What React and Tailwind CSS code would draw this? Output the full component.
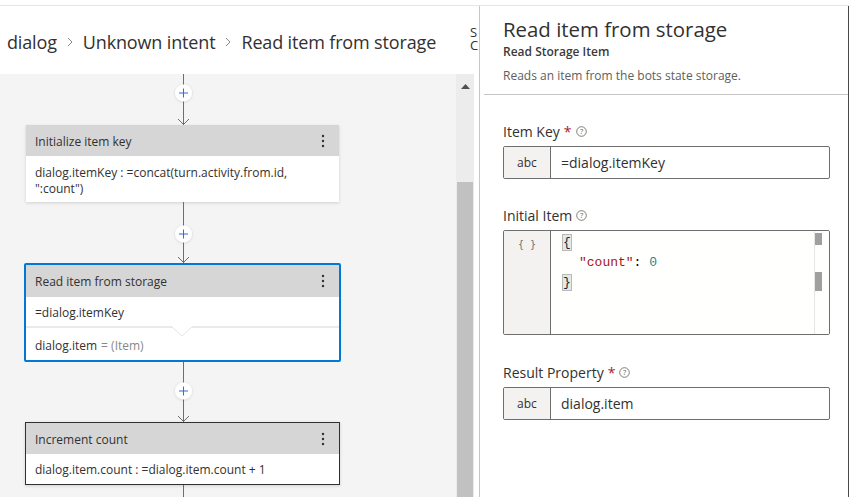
import React from "react";

const FONT = { fontFamily: '"Open Sans", "Noto Sans", sans-serif' };

function Chevron() {
  return (
    <svg width="8" height="12" viewBox="0 0 8 12" className="mx-[9px] shrink-0">
      <path d="M2 2 L6 6 L2 10" fill="none" stroke="#8a8886" strokeWidth="1" />
    </svg>
  );
}

function Connector({ h, c }) {
  return (
    <svg width="40" height={h} viewBox={`0 0 40 ${h}`} className="block">
      <defs>
        <filter id={`sh${h}`} x="-50%" y="-50%" width="200%" height="200%">
          <feDropShadow dx="0" dy="0.5" stdDeviation="1" floodColor="#000" floodOpacity="0.18" />
        </filter>
      </defs>
      <line x1="20.5" y1="0" x2="20.5" y2={h} stroke="#6e6e6e" strokeWidth="1" />
      <path d={`M15 ${h - 6} L20.5 ${h - 0.5} L26 ${h - 6}`} fill="none" stroke="#6e6e6e" strokeWidth="1" />
      <circle cx="20.5" cy={c} r="8.5" fill="#fff" filter={`url(#sh${h})`} />
      <path d={`M20.5 ${c - 4.5} V${c + 4.5} M16 ${c} H25`} stroke="#2f6fd6" strokeWidth="1" />
    </svg>
  );
}

function Kebab() {
  return (
    <svg width="4" height="14" viewBox="0 0 4 14">
      <circle cx="2" cy="2" r="1.2" fill="#323130" />
      <circle cx="2" cy="7" r="1.2" fill="#323130" />
      <circle cx="2" cy="12" r="1.2" fill="#323130" />
    </svg>
  );
}

function NodeHeader({ title, h = "h-[31px]" }) {
  return (
    <div className={`${h} bg-[#d6d6d6] flex items-center justify-between pl-[9px] pr-[14px]`}>
      <span className="text-[12px] text-[#323130] pt-[2px]">{title}</span>
      <Kebab />
    </div>
  );
}

function Help() {
  return (
    <svg width="11" height="11" viewBox="0 0 11 11" className="ml-[4px]">
      <circle cx="5.5" cy="5.5" r="4.8" fill="none" stroke="#605e5c" strokeWidth="0.8" />
      <text x="5.5" y="8.2" textAnchor="middle" fontSize="7.5" fill="#605e5c" fontFamily="Open Sans, sans-serif">?</text>
    </svg>
  );
}

function Label({ children, req }) {
  return (
    <div className="flex items-center text-[14px] text-[#323130] h-[20px]">
      <span>{children}</span>
      {req && <span className="text-[#a4262c] ml-[4px]">*</span>}
      <Help />
    </div>
  );
}

function TextField({ value }) {
  return (
    <div className="flex h-[33px] w-[327px] border border-[#6e6e6e] rounded-[2px] overflow-hidden">
      <div className="w-[47px] bg-[#f3f2f1] border-r border-[#6e6e6e] flex items-center justify-center text-[12px] text-[#323130]">abc</div>
      <div className="flex-1 flex items-center pl-[10px] text-[14px] text-[#323130]">{value}</div>
    </div>
  );
}

export default function App() {
  return (
    <div style={FONT} className="w-[849px] h-[497px] bg-white overflow-hidden flex flex-col">
      <div className="h-[6px] shrink-0 bg-white border-b border-[#e6e6e6]" />
      <div className="flex flex-1 min-h-0">
        {/* Left side */}
        <div className="w-[479px] flex flex-col shrink-0">
          <div className="h-[68px] flex items-center shrink-0">
            <div className="flex items-center w-[476px] shrink-0 overflow-hidden text-[18px] tracking-[-0.15px] text-[#323130] -ml-[6px] pt-[4px]">
              <svg width="8" height="12" viewBox="0 0 8 12" className="shrink-0 mr-[5px]">
                <path d="M2 2 L6 6 L2 10" fill="none" stroke="#8a8886" strokeWidth="1" />
              </svg>
              <span className="whitespace-nowrap">dialog</span>
              <Chevron />
              <span className="whitespace-nowrap">Unknown intent</span>
              <Chevron />
              <span className="whitespace-nowrap">Read item from storage</span>
            </div>
            <div className="w-[9px] shrink-0 overflow-hidden flex flex-col text-[13px] leading-[13px] text-[#323130] -mt-[3px]">
              <span>S</span>
              <span>C</span>
            </div>
          </div>
          <div className="flex flex-1 min-h-0">
            <div className="w-[456px] bg-[#f4f4f4] pl-[26px] flex flex-col">
              <div className="w-[313px] flex flex-col items-center">
                <Connector h={51} c={19} />
              </div>
              <div className="w-[313px] bg-white shadow-[0_1px_3px_rgba(0,0,0,0.15)]">
                <NodeHeader title="Initialize item key" />
                <div className="px-[9px] pt-[9px] pb-[5px] text-[12px] leading-[16px] text-[#323130]">
                  dialog.itemKey : =concat(turn.activity.from.id,
                  <br />
                  ":count")
                </div>
              </div>
              <div className="w-[313px] flex flex-col items-center">
                <Connector h={61} c={32} />
              </div>
              <div className="w-[317px] -ml-[2px] bg-white border-2 border-[#0078d4] rounded-[2px]">
                <NodeHeader title="Read item from storage" h="h-[32px]" />
                <div className="h-[29px] flex items-center px-[9px] pt-[3px] text-[12px] text-[#323130]">=dialog.itemKey</div>
                <div className="relative h-[2px] bg-[#eaeaea]">
                  <svg width="22" height="12" viewBox="0 0 22 12" className="absolute left-[145px] top-0">
                    <path d="M0 0 L11 10 L22 0" fill="#fff" stroke="#e4e4e4" strokeWidth="1" />
                  </svg>
                </div>
                <div className="h-[32px] flex items-center px-[9px] pt-[3px] text-[12px] text-[#323130]">
                  dialog.item<span className="text-[#8a8886] ml-[4px]">= (Item)</span>
                </div>
              </div>
              <div className="w-[313px] flex flex-col items-center">
                <Connector h={60} c={29} />
              </div>
              <div className="w-[315px] -ml-[1px] bg-white border border-[#323130] shadow-[0_1px_3px_rgba(0,0,0,0.15)]">
                <NodeHeader title="Increment count" />
                <div className="h-[30px] flex items-center px-[9px] pt-[2px] text-[12px] text-[#323130]">
                  dialog.item.count : =dialog.item.count + 1
                </div>
              </div>
              <div className="w-[313px] flex-1 flex justify-center">
                <div className="w-px bg-[#6e6e6e] ml-px" />
              </div>
            </div>
            <div className="w-[18px] bg-[#ececec] flex flex-col">
              <div className="h-[24px] flex items-center justify-center">
                <svg width="9" height="5" viewBox="0 0 9 5">
                  <path d="M0 5 L4.5 0 L9 5 Z" fill="#505050" />
                </svg>
              </div>
              <div className="h-[84px]" />
              <div className="flex-1 bg-[#c1c1c1] mx-[1px]" />
            </div>
          </div>
        </div>
        {/* Divider */}
        <div className="w-px bg-[#c8c6c4] shrink-0" />
        {/* Right panel */}
        <div className="flex-1 flex flex-col border-r border-[#4a4a4a]">
          <div className="pl-[23px] pt-[10px] h-[88px] shrink-0">
            <div className="text-[20.4px] leading-[27px] text-[#323130]">Read item from storage</div>
            <div className="text-[12px] leading-[16px] font-semibold text-[#3b3a39] mt-[1px]">Read Storage Item</div>
            <div className="text-[12px] leading-[16px] text-[#605e5c] mt-[8px]">Reads an item from the bots state storage.</div>
          </div>
          <div className="ml-[4px] h-px bg-[#c8c6c4]" />
          <div className="pl-[23px] flex flex-col">
            <div className="mt-[26px]"><Label req>Item Key</Label></div>
            <div className="mt-[5px]"><TextField value="=dialog.itemKey" /></div>
            <div className="mt-[26px]"><Label>Initial Item</Label></div>
            <div className="mt-[5px] flex h-[105px] w-[327px] border border-[#6e6e6e] rounded-[2px] overflow-hidden">
              <div className="w-[47px] bg-[#f3f2f1] border-r border-[#6e6e6e] flex justify-center pt-[6px]">
                <span className="text-[10px] text-[#707070] whitespace-pre" style={{ fontFamily: '"DejaVu Sans Mono", monospace' }}>{"{ }"}</span>
              </div>
              <div className="flex-1 relative bg-[#fffffe] pl-[12px] pt-[2px]" style={{ fontFamily: '"Liberation Mono", monospace' }}>
                <div className="text-[13px] leading-[20px]">
                  <div><span className="bg-[#e2ebe2] outline outline-1 outline-[#b9b9b9] text-[#1f1f3a]">{"{"}</span></div>
                  <div className="pl-[16px]"><span className="text-[#a31515]">"count"</span><span className="text-[#000]">: </span><span className="text-[#0f8aa0]">0</span></div>
                  <div><span className="bg-[#e2ebe2] outline outline-1 outline-[#b9b9b9] text-[#1f1f3a]">{"}"}</span></div>
                </div>
                <div className="absolute right-0 top-0 bottom-0 w-[15px] border-l border-[#e6e6e6]">
                  <div className="absolute left-[0px] top-[2px] w-[7px] h-[12px] bg-[#a0a0a0]" />
                  <div className="absolute left-[0px] top-[41px] w-[7px] h-[19px] bg-[#a0a0a0]" />
                </div>
              </div>
            </div>
            <div className="mt-[27px]"><Label req>Result Property</Label></div>
            <div className="mt-[5px]"><TextField value="dialog.item" /></div>
          </div>
        </div>
      </div>
    </div>
  );
}
